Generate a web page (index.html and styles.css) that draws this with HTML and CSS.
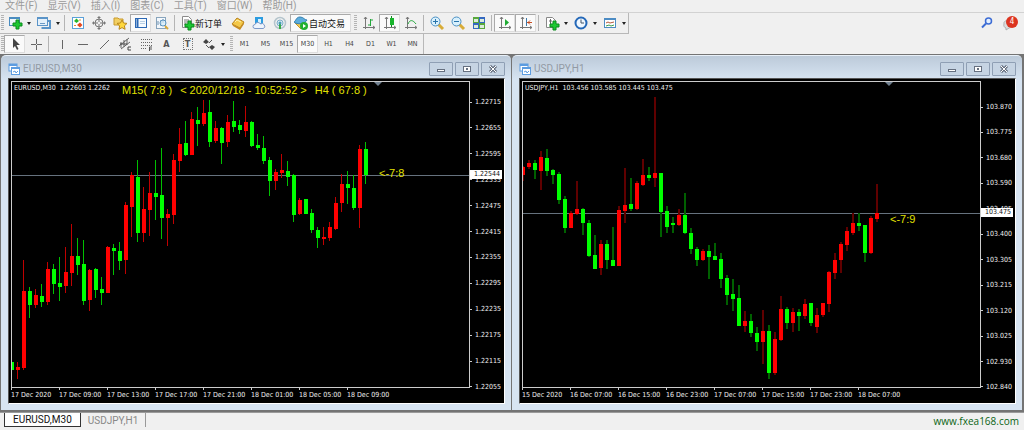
FILE: index.html
```html
<!DOCTYPE html>
<html lang="zh-CN">
<head>
<meta charset="utf-8">
<title>EURUSD,M30</title>
<link rel="stylesheet" href="styles.css">
</head>
<body>
<nav class="menu">
  <button>文件(F)</button><button>显示(V)</button><button>插入(I)</button><button>图表(C)</button><button>工具(T)</button><button>窗口(W)</button><button>帮助(H)</button>
</nav>

<div class="bar bar-main">
  <div class="tools">
    <span class="grip"></span>
    <button class="tool" aria-label="新图表"><svg width="16" height="16"><rect x="2.500" y="2.500" width="10" height="8" fill="#eef6fc" stroke="#4a8cc0"/><path d="M2 3h11" stroke="#4a8cc0" stroke-width="2"/><path d="M9 5h3v3h3v3h-3v3H9v-3H6V8h3z" fill="#1cc832" stroke="#0b8a1c"/></svg></button>
    <button class="drop" aria-label="更多图表"></button>
    <button class="tool" aria-label="模板"><svg width="16" height="16"><rect x="1.500" y="2.500" width="10" height="8" fill="#e4f0fa" stroke="#5a94c8"/><path d="M1 3h11" stroke="#5a94c8" stroke-width="2"/><path d="M5.500 13h8.500v-7h-2" fill="none" stroke="#5a94c8" stroke-width="2"/><path d="M4 8.500h5" stroke="#6c9ac4"/></svg></button>
    <button class="drop" aria-label="更多模板"></button>
    <span class="sep"></span>
    <button class="tool" aria-label="市场报价"><svg width="16" height="16"><rect x="2.500" y="2.500" width="11" height="11" fill="#fff" stroke="#5aa0d8" stroke-width="1"/><path d="M4 6l2.500-2.500L9 6 6.500 8z" fill="#28b428"/><path d="M7 10l3-2.500 2.500 2.500-2.500 2.500z" fill="#e44a20"/><path d="M9 5h2M4 10.500h2" stroke="#e48a30" stroke-width="1"/></svg></button>
    <button class="tool" aria-label="数据窗口"><svg width="16" height="16"><circle cx="8" cy="8" r="4" fill="none" stroke="#777"/><path d="M8 3v4M8 9v4M3 8h4M9 8h4" stroke="#777"/><path d="M6 3l2-2 2 2zM6 13l2 2 2-2zM3 6L1 8l2 2zM13 6l2 2-2 2z" fill="#777"/></svg></button>
    <button class="tool" aria-label="导航"><svg width="16" height="16"><path d="M2 3h4l1 1h4v6H2z" fill="#f2cf62" stroke="#c89a2c"/><path d="M10 5l1.500 3 3.500.4-2.600 2.400.7 3.500L10 12.600 7 14.300l.6-3.500L5 8.400 8.500 8z" fill="#ffd83c" stroke="#b8861c"/></svg></button>
    <button class="tool on" aria-label="终端"><svg width="16" height="16"><rect x="2.500" y="3.500" width="11" height="9" fill="#f6fbff" stroke="#2c68b4"/><path d="M4.500 4v8" stroke="#2c68b4" stroke-width="2"/><path d="M7 6.500h5M7 8.500h5" stroke="#b8cfe4"/></svg></button>
    <button class="tool" aria-label="策略测试"><svg width="16" height="16"><rect x="2.500" y="2.500" width="9" height="11" fill="#f4f8fc" stroke="#88a4bc"/><path d="M4 10V6M7 11V5M9 8V4" stroke="#6c90b0"/><circle cx="9" cy="8" r="3" fill="#d4ecfa" fill-opacity=".7" stroke="#5c94c0"/><path d="M11 11l3 3" stroke="#d8a838" stroke-width="2"/></svg></button>
    <span class="sep"></span>
    <button class="tool-text order"><svg width="16" height="16"><path d="M3.500 1.500h6l3 3v8h-9z" fill="#fff" stroke="#8a8a8a"/><path d="M5 5h5M5 7h4M5 9h2" stroke="#777"/><path d="M9 6h3v3h3v3h-3v3H9v-3H6V9h3z" fill="#1cc832" stroke="#0b8a1c"/></svg>新订单</button>
    <button class="tool" aria-label="编辑器"><svg width="16" height="16"><path d="M2 9l5-6 7 4-4 6z" fill="#f4c848" stroke="#b8821c"/><path d="M2 9l1 2 7 4 4-6V7l-4 6z" fill="#c88c20"/><path d="M5 7l2-2 4 2" stroke="#fff0b0" fill="none"/></svg></button>
    <button class="tool" aria-label="虚拟主机"><svg width="16" height="16"><rect x="4" y="2" width="8" height="8" fill="#2c9ce0"/><path d="M7 4h3v4H7z" fill="#d8f0fc"/><path d="M4 13.500a2 2 0 0 1 0-4 3 3 0 0 1 5.500-.5 2.500 2.500 0 0 1 3 4.500z" fill="#eef4fc" stroke="#7c98c8"/></svg></button>
    <button class="tool" aria-label="信号"><svg width="16" height="16"><circle cx="8" cy="8" r="5.500" fill="none" stroke="#b4c4cc" stroke-width="1.500"/><circle cx="8" cy="8" r="3" fill="#d8ecf4" stroke="#7cacc8"/><path d="M8 8v6" stroke="#38ac48" stroke-width="2"/><circle cx="8" cy="8" r="1.500" fill="#4c9cb4"/></svg></button>
    <button class="tool-text auto on"><svg width="16" height="16"><path d="M2 8l6 6 6-5-5-3z" fill="#f4cc50" stroke="#c49424"/><path d="M1 7c2-1 2-5 6-5s4 3 7 3c-2 4-10 5-13 2z" fill="#5cacdc" stroke="#3480b0"/><circle cx="11" cy="11" r="4" fill="#20b030"/><path d="M10 9l3 2-3 2z" fill="#fff"/></svg>自动交易</button>
    <span class="grip"></span>
    <button class="tool" aria-label="柱状图"><svg width="16" height="16"><path d="M4.500 2v12M2 12.500h12M3 4l1.500-2L6 4M12 11l2 1.500-2 1.500" fill="none" stroke="#777"/><path d="M9.500 4v7M9 5h3M7 10h3" stroke="#22a83a"/></svg></button>
    <button class="tool on" aria-label="阴阳烛"><svg width="16" height="16"><path d="M4.500 2v12M2 12.500h12M3 4l1.500-2L6 4M12 11l2 1.500-2 1.500" fill="none" stroke="#777"/><path d="M9.500 1v11" stroke="#108820"/><rect x="8" y="3" width="4" height="7" fill="#18b42c"/></svg></button>
    <button class="tool" aria-label="折线图"><svg width="16" height="16"><path d="M4.500 2v12M2 12.500h12M3 4l1.500-2L6 4M12 11l2 1.500-2 1.500" fill="none" stroke="#777"/><path d="M5 9c2-5 5-4 8 0" fill="none" stroke="#22a83a"/></svg></button>
    <span class="sep"></span>
    <button class="tool" aria-label="放大"><svg width="16" height="16"><path d="M9 9l5 5" stroke="#d8ac38" stroke-width="3"/><circle cx="6.500" cy="6.500" r="4.500" fill="#d8f0fc" stroke="#4c90c4"/><path d="M4 6.500h5M6.500 4v5" stroke="#2874ac"/></svg></button>
    <button class="tool" aria-label="缩小"><svg width="16" height="16"><path d="M9 9l5 5" stroke="#d8ac38" stroke-width="3"/><circle cx="6.500" cy="6.500" r="4.500" fill="#d8f0fc" stroke="#4c90c4"/><path d="M4 6.500h5" stroke="#2874ac"/></svg></button>
    <button class="tool" aria-label="平铺窗口"><svg width="16" height="16"><path d="M2 2h6v6H2zM8 8h6v6H8z" fill="#58a83c"/><path d="M8 2h6v6H8zM2 8h6v6H2z" fill="#3468c0"/><path d="M3 4h4v3H3zM9 4h4v3H9zM3 10h4v3H3zM9 10h4v3H9z" fill="#dcecdc"/></svg></button>
    <span class="sep"></span>
    <button class="tool on" aria-label="自动滚动"><svg width="16" height="16"><path d="M4.500 2v12M2 12.500h12M3 4l1.500-2L6 4M12 11l2 1.500-2 1.500" fill="none" stroke="#777"/><path d="M8 4l4 3.500L8 11z" fill="#20ac34"/></svg></button>
    <button class="tool on" aria-label="图表平移"><svg width="16" height="16"><path d="M4.500 2v12M2 12.500h12M3 4l1.500-2L6 4M12 11l2 1.500-2 1.500" fill="none" stroke="#777"/><path d="M8.500 3v8" stroke="#3c78a8"/><path d="M9 7.500h5M12 5.500l-2 2 2 2" fill="none" stroke="#c84c20"/></svg></button>
    <span class="sep"></span>
    <button class="tool" aria-label="指标"><svg width="16" height="16"><path d="M2.500 2.500h6l3 3v7h-9z" fill="#fff" stroke="#888"/><path d="M6.500 4v7M5 6h3" stroke="#666"/><path d="M9 6h3v3h3v3h-3v3H9v-3H6V9h3z" fill="#1cc832" stroke="#0b8a1c"/></svg></button>
    <button class="drop" aria-label="更多指标"></button>
    <button class="tool" aria-label="时间周期"><svg width="16" height="16"><circle cx="8" cy="8" r="5.500" fill="#f0f8ff" stroke="#2468b8" stroke-width="2"/><path d="M8 4.500V8h3" fill="none" stroke="#456"/></svg></button>
    <button class="drop" aria-label="更多周期"></button>
    <button class="tool" aria-label="图表模板"><svg width="16" height="16"><rect x="2.500" y="3.500" width="11" height="9" fill="#fff" stroke="#4c8cc4"/><path d="M2 4h12" stroke="#4c8cc4" stroke-width="2"/><path d="M4 8l2-1 2 1 4-1" fill="none" stroke="#b4583c"/><path d="M4 11l3-1 2 1 3-1" fill="none" stroke="#3c9c4c"/></svg></button>
    <button class="drop" aria-label="更多"></button>
  </div>
  <div class="status">
    <button class="tool" aria-label="搜索"><svg width="16" height="16"><circle cx="9.500" cy="6" r="3" fill="#e4f0ff" stroke="#3c6cd4" stroke-width="1.500"/><path d="M7 8.500l-4 4" stroke="#3c6cd4" stroke-width="2"/></svg></button>
    <button class="tool chat" aria-label="消息"><svg width="16" height="16"><path d="M2 9a4 3 0 0 1 8-1 3.500 3.500 0 0 1-3 5l-3 2v-2a3 3 0 0 1-2-4z" fill="#dcdcdc" stroke="#b0b0b0"/></svg><span class="badge">4</span></button>
  </div>
</div>

<div class="bar bar-draw">
  <div class="tools">
    <span class="grip"></span>
    <button class="tool on" aria-label="光标"><svg width="16" height="16"><path d="M6 2v10l2-2 2 4 1.500-1-2-4H13z" fill="#444"/></svg></button>
    <button class="tool" aria-label="十字准线"><svg width="16" height="16"><path d="M8.500 3v5M8.500 9v5M3 8.500h5M9 8.500h5" stroke="#666"/></svg></button>
    <span class="sep"></span>
    <button class="tool" aria-label="垂直线"><svg width="16" height="16"><path d="M8.500 4v9" stroke="#666"/></svg></button>
    <button class="tool" aria-label="水平线"><svg width="16" height="16"><path d="M3 8.500h10" stroke="#666"/></svg></button>
    <button class="tool" aria-label="趋势线"><svg width="16" height="16"><path d="M4 13l9-9" stroke="#666"/></svg></button>
    <button class="tool" aria-label="等距通道"><svg width="16" height="16"><path d="M2 10l10-8M4 13l9-7M4 6v6M7 4v7M10 3v6" stroke="#666"/><path d="M14 11h-3v3h3M3 8h7" fill="none" stroke="#444"/></svg></button>
    <button class="tool" aria-label="斐波纳契"><svg width="16" height="16"><path d="M3 3.500h11M3 6.500h11M3 9.500h11M3 12.500h6" stroke="#666" stroke-dasharray="1 1"/><path d="M11.500 15v-4H14M11 13h3" fill="none" stroke="#555"/></svg></button>
    <button class="tool letter">A</button>
    <button class="tool letter boxed" aria-label="文本标签"><span>T</span></button>
    <button class="tool" aria-label="箭头"><svg width="16" height="16"><path d="M2 6l3-3 3 3-3 2zM8 11l3-2 3 2-3 3z" fill="#444"/><path d="M8 7l3-3M5 9l3 3" stroke="#555"/></svg></button>
    <button class="drop" aria-label="更多箭头"></button>
    <span class="grip"></span>
    <button class="tool">M1</button><button class="tool">M5</button><button class="tool">M15</button><button class="tool on">M30</button><button class="tool">H1</button><button class="tool">H4</button><button class="tool">D1</button><button class="tool">W1</button><button class="tool">MN</button>
  </div>
</div>

<main class="workspace">
  <section class="window">
    <header class="titlebar">
      <svg width="12" height="12"><rect x="1" y="1" width="8" height="7" fill="#fff" stroke="#5c9ce0"/><path d="M1 2h8" stroke="#5c9ce0" stroke-width="2"/><rect x="3.500" y="4.500" width="8" height="7" fill="#fff" stroke="#5c9ce0"/><path d="M3 5h9" stroke="#5c9ce0" stroke-width="2"/><path d="M5 9l2-1 1 2 2-2" fill="none" stroke="#5c9ce0"/></svg>
      <h2>EURUSD,M30</h2>
      <button aria-label="最小化"><svg width="10" height="8"><rect x="1.500" y="4.500" width="7" height="2" fill="#fff" stroke="#667080"/></svg></button>
      <button aria-label="最大化"><svg width="10" height="8"><rect x="1.500" y="1.500" width="7" height="5" fill="#fff" stroke="#667080"/><path d="M4 4h2" stroke="#667080" stroke-width="2"/></svg></button>
      <button aria-label="关闭"><svg width="10" height="8"><path d="M2 1l6 6M8 1L2 7" stroke="#667080" stroke-width="3"/><path d="M2 1l6 6M8 1L2 7" stroke="#fff"/></svg></button>
    </header>
    <div class="chart">
      <div class="plot">
        <svg class="candles" id="eurusd"></svg>
        <p class="quote">EURUSD,M30&nbsp; 1.22603 1.2262</p>
        <p class="clock"><span>M15( 7:8 )</span><span>&lt; 2020/12/18 - 10:52:52 &gt;</span><span>H4 ( 67:8 )</span></p>
        <p class="countdown countdown-eur">&lt;-7:8</p>
      </div>
      <div class="prices prices-eur">
        <span>1.22715</span><span>1.22655</span><span>1.22595</span><span>1.22535</span><span>1.22475</span><span>1.22415</span><span>1.22355</span><span>1.22295</span><span>1.22235</span><span>1.22175</span><span>1.22115</span><span>1.22055</span>
        <b class="bid bid-eur">1.22544</b>
      </div>
      <div class="times"><span>17 Dec 2020</span><span>17 Dec 09:00</span><span>17 Dec 13:00</span><span>17 Dec 17:00</span><span>17 Dec 21:00</span><span>18 Dec 01:00</span><span>18 Dec 05:00</span><span>18 Dec 09:00</span></div>
    </div>
  </section>

  <section class="window">
    <header class="titlebar">
      <svg width="12" height="12"><rect x="1" y="1" width="8" height="7" fill="#fff" stroke="#5c9ce0"/><path d="M1 2h8" stroke="#5c9ce0" stroke-width="2"/><rect x="3.500" y="4.500" width="8" height="7" fill="#fff" stroke="#5c9ce0"/><path d="M3 5h9" stroke="#5c9ce0" stroke-width="2"/><path d="M5 9l2-1 1 2 2-2" fill="none" stroke="#5c9ce0"/></svg>
      <h2>USDJPY,H1</h2>
      <button aria-label="最小化"><svg width="10" height="8"><rect x="1.500" y="4.500" width="7" height="2" fill="#fff" stroke="#667080"/></svg></button>
      <button aria-label="最大化"><svg width="10" height="8"><rect x="1.500" y="1.500" width="7" height="5" fill="#fff" stroke="#667080"/><path d="M4 4h2" stroke="#667080" stroke-width="2"/></svg></button>
      <button aria-label="关闭"><svg width="10" height="8"><path d="M2 1l6 6M8 1L2 7" stroke="#667080" stroke-width="3"/><path d="M2 1l6 6M8 1L2 7" stroke="#fff"/></svg></button>
    </header>
    <div class="chart">
      <div class="plot">
        <svg class="candles" id="usdjpy"></svg>
        <p class="quote">USDJPY,H1&nbsp; 103.456 103.585 103.445 103.475</p>
        <p class="countdown countdown-jpy">&lt;-7:9</p>
      </div>
      <div class="prices prices-jpy">
        <span>103.870</span><span>103.775</span><span>103.680</span><span>103.590</span><span>103.495</span><span>103.400</span><span>103.305</span><span>103.215</span><span>103.120</span><span>103.025</span><span>102.930</span><span>102.840</span>
        <b class="bid bid-jpy">103.475</b>
      </div>
      <div class="times"><span>15 Dec 2020</span><span>16 Dec 07:00</span><span>16 Dec 15:00</span><span>16 Dec 23:00</span><span>17 Dec 07:00</span><span>17 Dec 15:00</span><span>17 Dec 23:00</span><span>18 Dec 07:00</span></div>
    </div>
  </section>
</main>

<footer class="tabs">
  <button class="tab active">EURUSD,M30</button>
  <button class="tab">USDJPY,H1</button>
  <a class="site" href="#">www.fxea168.com</a>
</footer>
<script src="chart.js"></script>
</body>
</html>
```
FILE: styles.css
```css
* { box-sizing: border-box; }
body {
  margin: 0;
  min-height: 100vh;
  display: flex;
  flex-direction: column;
  background: #f0f0f0;
  color: #222;
  font-family: Roboto, "Noto Sans CJK SC", sans-serif;
  font-size: 10px;
}
p, h2 { margin: 0; font-weight: normal; }
button {
  margin: 0;
  padding: 0;
  border: 0;
  background: none;
  color: inherit;
  font: inherit;
}
svg { display: block; flex: none; }

.menu {
  display: flex;
  gap: 10px;
  height: 13px;
  padding-left: 5px;
  align-items: flex-end;
  border-bottom: 1px solid #d2d2d2;
  color: #9a9a9a;
}
.menu button { line-height: 13px; white-space: nowrap; }

.bar { display: flex; justify-content: space-between; }
.tools {
  display: flex;
  align-items: center;
  height: 21px;
  border-right: 1px solid #b8b8b8;
  border-bottom: 1px solid #b8b8b8;
}
.bar-draw .tools { height: 20px; border-bottom: 0; }
.grip {
  width: 3px;
  height: 16px;
  margin-left: 1px;
  background: repeating-linear-gradient(#b4b4b4 0 1px, #f0f0f0 1px 2px);
}
button + .grip { margin: 0 1px 0 3px; }
.sep {
  width: 1px;
  height: 16px;
  margin: 0 2px;
  background: #b4b4b4;
}
.tool {
  display: flex;
  width: 21px;
  height: 18px;
  align-items: center;
  justify-content: center;
  border: 1px solid transparent;
  font-family: "DejaVu Sans Condensed", "DejaVu Sans", sans-serif;
  font-size: 7px;
  color: #444;
}
.on {
  background: #fafafa;
  border: 1px solid;
  border-color: #aaa #ddd #ddd #aaa;
}
.drop {
  display: flex;
  width: 8px;
  justify-content: center;
}
.drop::before {
  content: "";
  border: 2px solid transparent;
  border-top: 3px solid #222;
  border-bottom: 0;
}
.tool-text {
  display: flex;
  height: 18px;
  align-items: center;
  padding: 0 5px 0 2px;
  font-size: 9px;
  color: #111;
  white-space: nowrap;
}
.letter { font-size: 9px; font-weight: bold; color: #555; }
.boxed span {
  width: 10px;
  line-height: 10px;
  border: 1px dotted #777;
}
.status { display: flex; gap: 2px; padding: 1px 4px 0 0; }
.chat { position: relative; }
.badge {
  position: absolute;
  top: 1px;
  right: 1px;
  width: 12px;
  height: 12px;
  border-radius: 6px;
  background: #dc3420;
  color: #fff;
  font-size: 8px;
  line-height: 12px;
}

.workspace {
  flex: 1;
  display: grid;
  grid-template-columns: 1fr 1fr;
  gap: 1px;
  padding: 1px 2px 2px 1px;
  background: #747474;
  border-bottom: 1px solid #9a9a9a;
}
.window {
  display: flex;
  flex-direction: column;
  min-width: 0;
  padding: 0 6px 6px 7px;
  border-top: 1px solid #e8f0f8;
  border-radius: 5px 5px 0 0;
  background: linear-gradient(#bccad9, #d7e4f2 24px);
}
.titlebar {
  display: flex;
  gap: 2px;
  height: 22px;
  padding-top: 3px;
  align-items: center;
  color: #929aa4;
}
.titlebar h2 { flex: 1; padding-left: 1px; font-size: 10px; }
.titlebar button {
  display: flex;
  width: 24px;
  height: 14px;
  align-items: center;
  justify-content: center;
  border: 1px solid #8f9fb4;
  border-radius: 1px;
  background: #c6d4e3;
}

.chart {
  flex: 1;
  display: grid;
  grid-template: 1fr 15px / 1fr 34px;
  padding: 2px 0 0 2px;
  background: #000;
  border: 1px solid #fff;
  border-color: #555 #fff #fff #555;
  color: #f0f0f0;
  font-family: "DejaVu Sans Condensed", "DejaVu Sans", sans-serif;
  font-size: 7px;
  line-height: 10px;
  white-space: nowrap;
}
.plot { position: relative; border: 1px solid #ccc; }
.candles {
  position: absolute;
  width: 100%;
  height: 100%;
}
.up { fill: #f00; }
.down { fill: #0f0; }
.fine .wick.up { fill: #c00000; }
.fine .wick.down { fill: #00c000; }
.wide .wick.up { fill: #600000; }
.wide .wick.down { fill: #006000; }
.level { stroke: #66727e; }
.marker { fill: #708090; }
.quote { position: absolute; top: 1px; left: 2px; }
.clock, .countdown {
  position: absolute;
  color: #e0e000;
  font-family: "Liberation Sans", sans-serif;
  font-size: 11px;
  line-height: 12px;
}
.clock {
  top: 2px;
  left: 110px;
  display: flex;
  gap: 8px;
}
.countdown-eur { top: 85px; left: 367px; }
.countdown-jpy { top: 131px; left: 367px; }
.prices {
  position: relative;
  display: flex;
  flex-direction: column;
  justify-content: space-between;
  margin-bottom: -4px;
}
.prices span { display: flex; align-items: center; }
.prices span::before {
  content: "";
  width: 2px;
  height: 1px;
  margin-right: 3px;
  background: #ccc;
}
.prices-eur { padding-top: 16px; }
.prices-jpy { padding-top: 21px; }
.bid {
  position: absolute;
  left: 0;
  width: 32px;
  padding-left: 4px;
  background: #fff;
  color: #111;
  font-weight: normal;
  line-height: 9px;
}
.bid-eur { top: 89px; }
.bid-jpy { top: 127px; }
.times {
  display: grid;
  grid-template-columns: repeat(8, 48px);
  padding-top: 2px;
}
.times span { position: relative; }
.times span::before {
  content: "";
  position: absolute;
  top: -2px;
  left: 0;
  width: 1px;
  height: 2px;
  background: #ccc;
}

.tabs {
  display: flex;
  height: 17px;
  align-items: flex-start;
  padding-left: 4px;
}
.tab {
  height: 14px;
  padding: 0 7px;
  border-right: 1px solid #999;
  line-height: 13px;
  color: #888;
}
.active {
  padding: 0 8px;
  background: #fff;
  border: 1px solid #333;
  border-top: 0;
  color: #111;
}
.site {
  margin-left: auto;
  padding-right: 5px;
  color: #0a6414;
  font-family: "Open Sans", sans-serif;
  font-size: 10px;
  line-height: 17px;
  text-decoration: none;
}
```
FILE: chart.js
```js
// Each bar: direction (1 up, 0 down), wick top, wick bottom, body top, body bottom.
const eurusd = [
  [0,280,295,280,288],[1,280,297,285,288],[1,178,288,209,286],[0,205,236,209,223],[1,207,226,213,223],
  [0,202,225,214,220],[1,180,223,187,220],[0,182,212,187,202],[0,175,219,201,205],[1,165,211,190,204],
  [1,142,204,174,191],[0,156,193,174,183],[0,158,223,182,219],[1,187,229,188,218],[0,186,216,187,208],
  [0,195,223,207,211],[1,164,211,165,211],[0,162,193,166,169],[0,160,188,169,179],[1,120,192,123,178],
  [1,90,155,93,125],[0,78,160,95,151],[1,105,160,127,151],[1,90,154,111,128],[0,78,138,111,115],
  [0,66,157,113,136],[1,127,164,132,136],[1,72,142,78,133],[1,46,90,62,79],[0,39,74,61,73],
  [1,30,73,37,73],[0,25,64,38,42],[1,18,44,31,42],[0,18,65,30,60],[1,39,61,46,59],
  [0,45,82,46,61],[1,33,65,40,60],[0,19,50,39,45],[0,38,52,43,48],[1,24,55,40,49],
  [0,39,65,40,64],[0,52,68,63,66],[0,54,82,66,79],[0,75,114,78,99],[1,87,108,90,99],
  [1,72,96,88,91],[0,79,104,89,95],[0,92,140,93,133],[1,116,133,118,132],[0,117,132,117,132],
  [0,127,151,131,148],[0,145,166,148,156],[1,145,163,155,157],[1,140,159,145,156],[1,115,148,121,147],
  [1,92,130,102,121],[0,89,122,102,106],[0,93,128,106,126],[1,63,146,67,126],[0,60,102,67,93]
];
const usdjpy = [
  [1,84,99,85,93],[1,78,87,81,85],[0,78,97,81,88],[1,69,108,75,89],[0,67,94,76,89],
  [0,87,102,88,93],[0,90,122,92,118],[0,114,151,117,146],[1,129,146,131,146],[1,99,133,127,132],
  [0,126,153,127,141],[0,138,175,141,174],[0,153,187,173,187],[1,158,193,162,186],[0,158,187,162,178],
  [0,145,184,178,184],[1,124,184,128,184],[1,86,141,123,129],[0,96,129,122,127],[1,99,128,101,127],
  [1,77,104,93,103],[0,85,99,93,96],[1,15,105,91,96],[0,91,155,91,130],[0,124,151,129,145],
  [0,135,151,141,143],[1,127,144,133,143],[0,111,152,133,151],[0,146,172,151,167],[0,165,184,167,178],
  [1,167,179,169,178],[0,163,197,169,175],[0,161,178,174,178],[0,171,206,177,197],[0,193,223,196,213],
  [0,197,229,212,217],[0,203,244,216,244],[1,229,250,239,244],[0,232,255,239,251],[0,245,269,251,260],
  [1,228,282,249,260],[0,243,297,249,291],[1,250,293,257,291],[1,214,259,227,258],[0,225,247,227,241],
  [1,226,250,230,241],[0,227,249,230,234],[1,217,237,222,234],[0,221,244,221,241],[1,226,251,233,245],
  [1,221,235,221,233],[1,189,230,190,222],[1,171,197,178,191],[1,160,191,162,178],[1,145,169,149,163],
  [1,131,153,141,151],[0,131,149,141,144],[0,143,180,143,171],[1,134,172,136,171],[1,102,140,131,137]
];

function draw(id, bars, wick, level) {
  const svg = document.getElementById(id);
  svg.classList.add(wick === 1 ? "fine" : "wide");
  const rect = (cls, x, y, w, h) => `<rect class="${cls}" x="${x}" y="${y}" width="${w}" height="${h}"/>`;
  let out = `<line class="level" x1="0" x2="100%" y1="${level + 0.5}" y2="${level + 0.5}"/>`;
  bars.forEach(([up, high, low, top, bottom], i) => {
    const side = up ? "up" : "down";
    const x = i * 6;
    out += rect("wick " + side, x - 1, high, wick, low - high);
    out += rect(side, x - 2, top, 4, Math.max(bottom - top, 2));
  });
  out += '<path class="marker" d="M362 0h8l-4 4z"/>';
  svg.innerHTML = out;
}
draw("eurusd", eurusd, 1, 93);
draw("usdjpy", usdjpy, 2, 131);
```
